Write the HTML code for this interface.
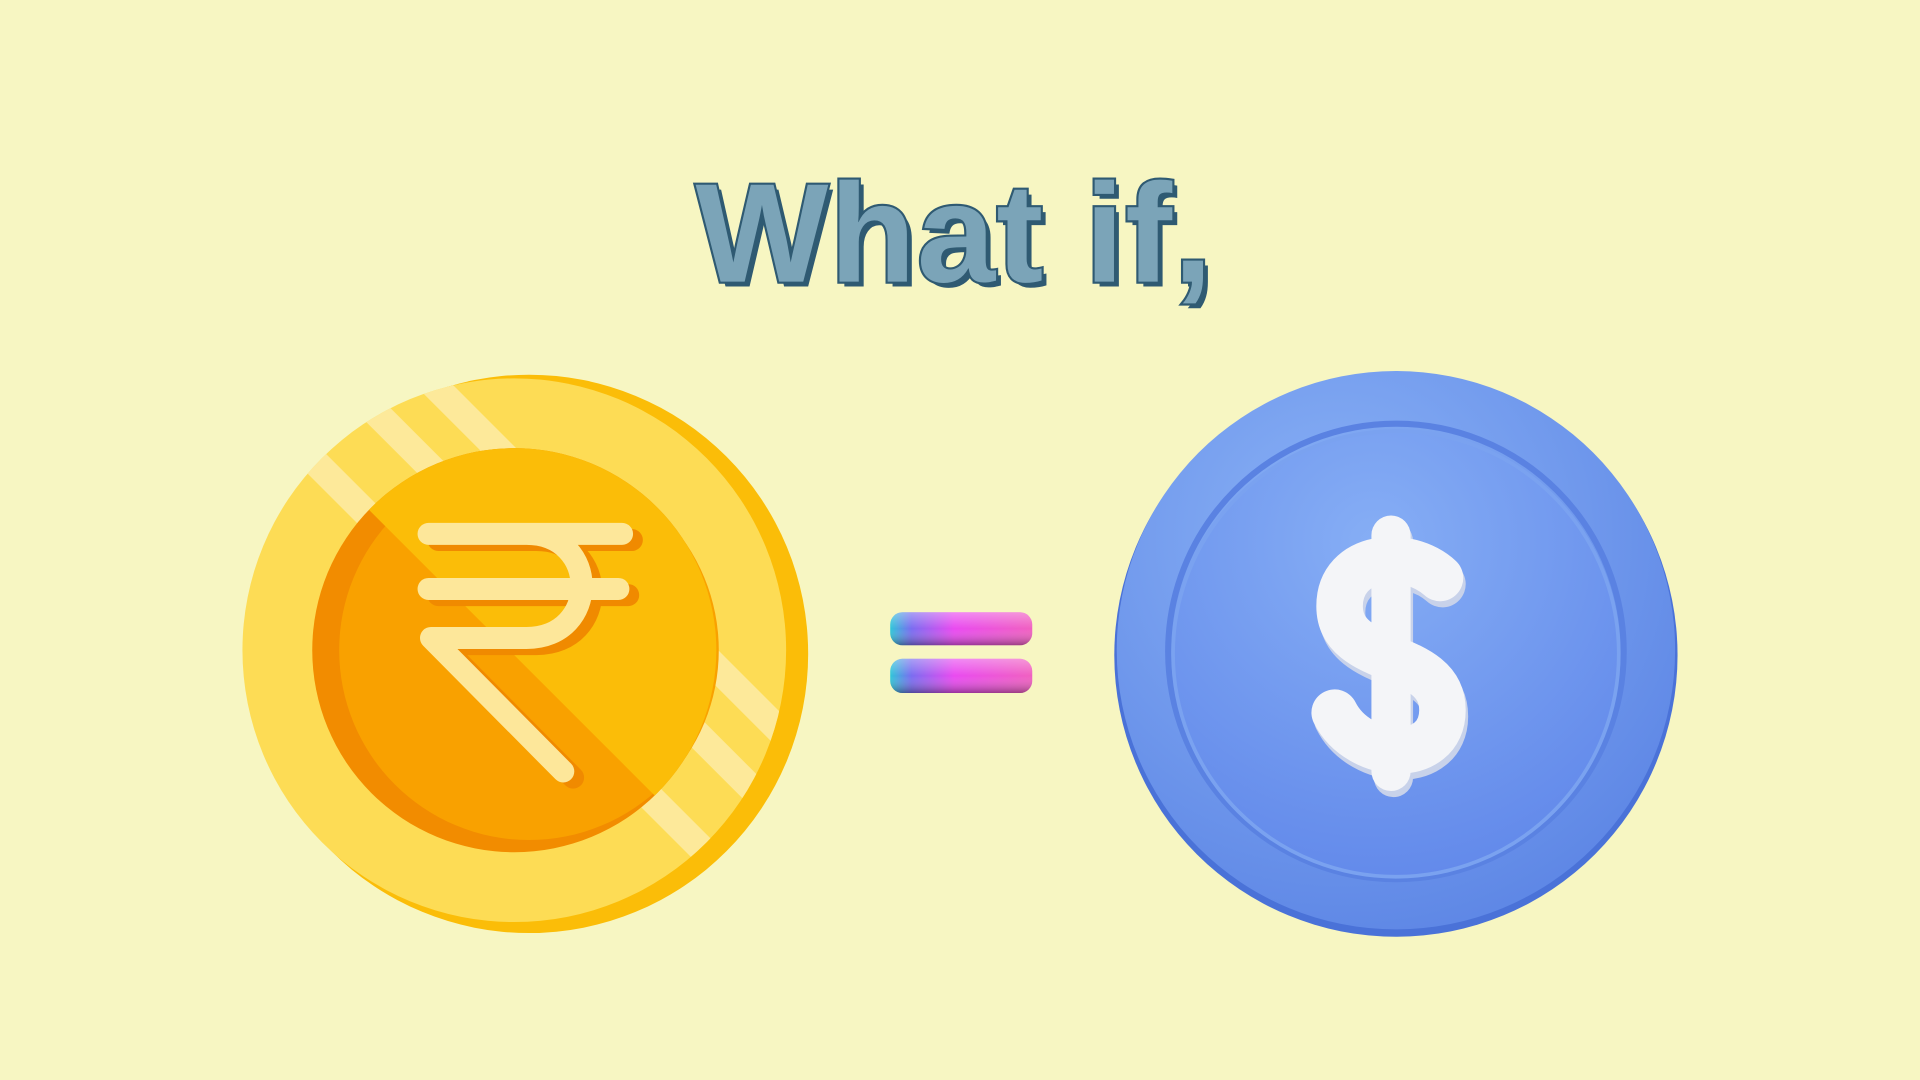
<!DOCTYPE html>
<html><head><meta charset="utf-8"><style>
html,body{margin:0;padding:0;background:#f7f6c2;}
svg{display:block}
</style></head><body>
<svg width="1920" height="1080" viewBox="0 0 1568 882" xmlns="http://www.w3.org/2000/svg">
<defs>
<linearGradient id="eq" x1="0" x2="1" y1="0" y2="0">
<stop offset="0" stop-color="#2fc6d8"/><stop offset="0.15" stop-color="#7a6cf0"/><stop offset="0.45" stop-color="#e94af0"/><stop offset="1" stop-color="#f060c0"/>
</linearGradient>
<linearGradient id="eqs" x1="0" x2="0" y1="0" y2="1">
<stop offset="0" stop-color="#fff" stop-opacity="0.35"/><stop offset="0.5" stop-color="#fff" stop-opacity="0"/><stop offset="1" stop-color="#000" stop-opacity="0.35"/>
</linearGradient>
<radialGradient id="blue" cx="0.4" cy="0.3" r="0.8">
<stop offset="0" stop-color="#8ab2f6"/><stop offset="1" stop-color="#5a83e4"/>
</radialGradient>
<radialGradient id="blue2" cx="0.45" cy="0.25" r="0.8">
<stop offset="0" stop-color="#86aef5"/><stop offset="1" stop-color="#6188ea"/>
</radialGradient>
<clipPath id="gc"><circle cx="420" cy="531" r="222"/></clipPath>
<clipPath id="ic"><circle cx="420" cy="531" r="165"/></clipPath>
</defs>
<!-- title -->
<text x="572" y="234" font-family="Liberation Sans, sans-serif" font-weight="bold" font-size="115" letter-spacing="1" fill="#2f5a72">What if,</text>
<text x="568" y="230" font-family="Liberation Sans, sans-serif" font-weight="bold" font-size="115" letter-spacing="1" fill="#7ba4b8" stroke="#2f5a72" stroke-width="3.5" paint-order="stroke">What if,</text>
<!-- gold coin -->
<circle cx="432" cy="534" r="228" fill="#fbbd08"/>
<circle cx="420" cy="531" r="222" fill="#fddc55"/>
<g clip-path="url(#gc)" stroke="#fde99a" stroke-width="22">
<line x1="180" y1="300" x2="640" y2="760"/>
<line x1="230" y1="260" x2="690" y2="720"/>
<line x1="270" y1="230" x2="730" y2="690"/>
</g>
<circle cx="420" cy="531" r="165" fill="#f28c00"/>
<circle cx="432" cy="531" r="155" fill="#f9a100"/>
<g clip-path="url(#ic)"><path d="M230,345 L700,345 L700,815 Z" fill="#fbbd08"/></g>
<g fill="none" stroke-linecap="round" stroke-linejoin="round" stroke-width="18">
<path d="M358,441 H516 M358,486 H513 M438,441 C498,441 498,526 438,526 H360 L468,635" stroke="#f08a00"/>
<path d="M350,436 H508 M350,481 H505 M430,436 C490,436 490,521 430,521 H352 L460,630" stroke="#fde79a"/>
</g>
<!-- equals -->
<rect x="727" y="500" width="116" height="27" rx="10" fill="url(#eq)"/>
<rect x="727" y="500" width="116" height="27" rx="10" fill="url(#eqs)"/>
<rect x="727" y="538" width="116" height="28" rx="10" fill="url(#eq)"/>
<rect x="727" y="538" width="116" height="28" rx="10" fill="url(#eqs)"/>
<!-- blue coin -->
<circle cx="1140" cy="535" r="230" fill="#4a72d8"/>
<circle cx="1140" cy="531" r="228" fill="url(#blue)"/>
<circle cx="1140" cy="532" r="186" fill="none" stroke="#5a82e2" stroke-width="5"/>
<circle cx="1140" cy="534" r="182" fill="url(#blue2)" stroke="#7aa2f0" stroke-width="3"/>
<g fill="none" stroke-linecap="round" stroke-linejoin="round">
<g stroke="#c8d2ea" transform="translate(2,5)">
<path d="M1136,437 V630" stroke-width="32"/>
<path d="M1176,472 C1150,448 1094,452 1094,495 C1094,545 1178,530 1178,580 C1178,625 1110,622 1090,582" stroke-width="38"/>
</g>
<g stroke="#f4f5f8">
<path d="M1136,437 V630" stroke-width="32"/>
<path d="M1176,472 C1150,448 1094,452 1094,495 C1094,545 1178,530 1178,580 C1178,625 1110,622 1090,582" stroke-width="38"/>
</g>
</g>
</svg>
</body></html>
